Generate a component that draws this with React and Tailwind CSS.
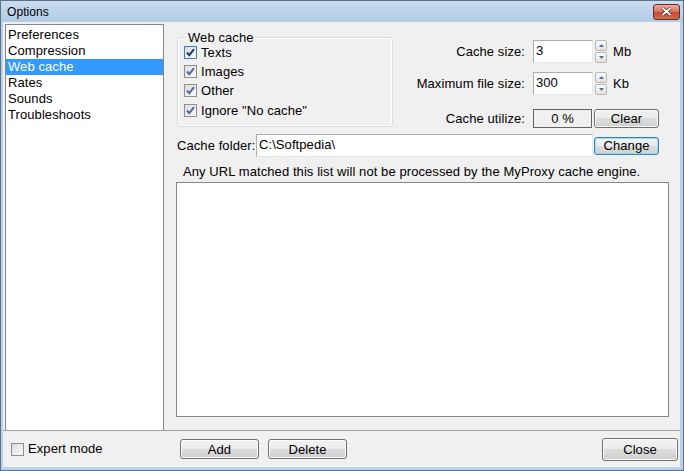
import React from "react";

const menu = ["Preferences", "Compression", "Web cache", "Rates", "Sounds", "Troubleshoots"];

function CheckBox({ checked, focused }) {
  return (
    <span
      className={`flex h-[13px] w-[13px] shrink-0 items-center justify-center border ${
        focused ? "border-[#3c7fb1]" : "border-[#8e8f8f]"
      } bg-[linear-gradient(135deg,#dcdcdc,#fbfbfb)]`}
    >
      {checked && (
        <svg width="11" height="11" viewBox="0 0 11 11">
          <path
            d="M2 5.5L4.3 8.2L9 2.2"
            fill="none"
            stroke={focused ? "#1f3471" : "#55689a"}
            strokeWidth="2"
          />
        </svg>
      )}
    </span>
  );
}

function Spin() {
  return (
    <div className="ml-[2px] flex h-[23px] w-[12px] flex-col gap-[1px]">
      <div className="flex flex-1 items-center justify-center rounded-[2px] border border-[#b7b7b7] bg-[linear-gradient(#fafafa,#e2e2e2)]">
        <svg width="5" height="3" viewBox="0 0 5 3">
          <path d="M0 3L2.5 0L5 3Z" fill="#4a6fa5" />
        </svg>
      </div>
      <div className="flex flex-1 items-center justify-center rounded-[2px] border border-[#b7b7b7] bg-[linear-gradient(#fafafa,#e2e2e2)]">
        <svg width="5" height="3" viewBox="0 0 5 3">
          <path d="M0 0L2.5 3L5 0Z" fill="#4a6fa5" />
        </svg>
      </div>
    </div>
  );
}

function Btn({ children, className = "", focused }) {
  return (
    <button
      className={`flex items-center justify-center rounded-[3px] border leading-none ${
        focused
          ? "border-[#3c7fb1] shadow-[inset_0_0_0_1px_#9fd8f5]"
          : "border-[#707070] shadow-[inset_0_0_0_1px_#fcfcfc]"
      } bg-[linear-gradient(#f2f2f2,#ebebeb_50%,#dddddd_50%,#cfcfcf)] ${className}`}
    >
      {children}
    </button>
  );
}

export default function App() {
  return (
    <div className="flex h-[471px] w-[684px] flex-col border border-[#5f7189] bg-[#b9d1ea] font-['Liberation_Sans',Arial,sans-serif] text-[13px] tracking-[0.08px] text-black">
      {/* title bar */}
      <div className="flex h-[21px] shrink-0 items-center justify-between bg-[linear-gradient(#cadcef,#b3cbe5)] pl-[6px] pr-[3px]">
        <span className="pt-[1px] text-[12px]">Options</span>
        <div className="flex h-[16px] w-[27px] items-center justify-center rounded-[3px] border border-[#6b2b21] bg-[linear-gradient(#e9ac9d,#d87663_45%,#c44a33_55%,#d06d52)]">
          <svg width="11" height="9" viewBox="0 0 11 9">
            <path d="M1.5 1L9.5 8M9.5 1L1.5 8" stroke="#5a2018" strokeWidth="3.2" />
            <path d="M1.5 1L9.5 8M9.5 1L1.5 8" stroke="#ffffff" strokeWidth="1.8" />
          </svg>
        </div>
      </div>

      {/* client */}
      <div className="mb-[3px] ml-[2px] mr-[3px] flex flex-1 flex-col bg-[#f0f0f0]">
        <div className="flex h-[408px]">
          <div className="ml-[2px] mt-[2px] w-[159px] border border-b-0 border-[#828790] bg-white pt-[2px]">
            {menu.map((m) => (
              <div
                key={m}
                className={`h-[16px] pl-[2px] leading-[16px] ${
                  m === "Web cache" ? "bg-[#3399ff] text-white" : ""
                }`}
              >
                {m}
              </div>
            ))}
          </div>

          <div className="flex flex-1 flex-col pl-[12px] pr-[11px]">
            <div className="flex h-[106px]">
              <fieldset className="ml-[1px] mt-[8px] h-[97px] w-[216px] rounded-[3px] border border-[#d5dfe5] shadow-[inset_0_0_0_1px_#ffffff]">
                <legend className="ml-[8px] px-[2px] leading-[15px]">Web cache</legend>
                <div className="flex flex-col gap-[6px] pl-[6px] pt-[1px]">
                  <label className="flex h-[13px] items-center gap-[4px] leading-[13px]">
                    <CheckBox checked focused />
                    Texts
                  </label>
                  <label className="flex h-[13px] items-center gap-[4px] leading-[13px]">
                    <CheckBox checked />
                    Images
                  </label>
                  <label className="flex h-[13px] items-center gap-[4px] leading-[13px]">
                    <CheckBox checked />
                    Other
                  </label>
                  <label className="mt-[1px] flex h-[13px] items-center gap-[4px] leading-[13px]">
                    <CheckBox checked />
                    Ignore "No cache"
                  </label>
                </div>
              </fieldset>

              <div className="flex flex-col">
                <div className="mt-[18px] flex h-[23px] items-center">
                  <span className="w-[132px] text-right">Cache size:</span>
                  <div className="ml-[8px] h-[23px] w-[60px] border border-[#abadb3] border-b-[#e3e9ef] border-r-[#e3e9ef] bg-white pl-[2px] leading-[20px]">
                    3
                  </div>
                  <Spin />
                  <span className="ml-[6px]">Mb</span>
                </div>
                <div className="mt-[9px] flex h-[23px] items-center">
                  <span className="w-[132px] text-right">Maximum file size:</span>
                  <div className="ml-[8px] h-[23px] w-[60px] border border-[#abadb3] border-b-[#e3e9ef] border-r-[#e3e9ef] bg-white pl-[2px] leading-[20px]">
                    300
                  </div>
                  <Spin />
                  <span className="ml-[6px]">Kb</span>
                </div>
                <div className="mt-[14px] flex h-[19px] items-center">
                  <span className="w-[132px] text-right">Cache utilize:</span>
                  <div className="ml-[8px] flex h-[19px] w-[59px] items-center justify-center border border-[#646464] leading-none">
                    0 %
                  </div>
                  <Btn className="ml-[2px] h-[19px] w-[65px]">Clear</Btn>
                </div>
              </div>
            </div>

            <div className="mt-[6px] flex h-[23px] items-center">
              <span className="ml-[1px] w-[79px]">Cache folder:</span>
              <div className="h-[23px] w-[337px] border border-[#abadb3] border-b-[#e3e9ef] border-r-[#e3e9ef] bg-white pl-[2px] leading-[20px]">
                C:\Softpedia\
              </div>
              <Btn focused className="ml-[1px] h-[18px] w-[65px]">
                Change
              </Btn>
            </div>

            <div className="h-[25px] pl-[7px] pt-[7px] leading-[15px]">
              Any URL matched this list will not be processed by the MyProxy cache engine.
            </div>

            <div className="h-[235px] border border-[#828790] bg-white" />
          </div>
        </div>

        <div className="flex h-[37px] items-center border-t border-[#a0a0a0]">
          <div className="flex w-[177px] items-center gap-[4px] pl-[8px]">
            <CheckBox />
            <span>Expert mode</span>
          </div>
          <Btn className="h-[20px] w-[79px]">Add</Btn>
          <Btn className="ml-[9px] h-[20px] w-[79px]">Delete</Btn>
          <Btn className="ml-auto mr-[2px] h-[23px] w-[76px]">Close</Btn>
        </div>
      </div>
    </div>
  );
}
